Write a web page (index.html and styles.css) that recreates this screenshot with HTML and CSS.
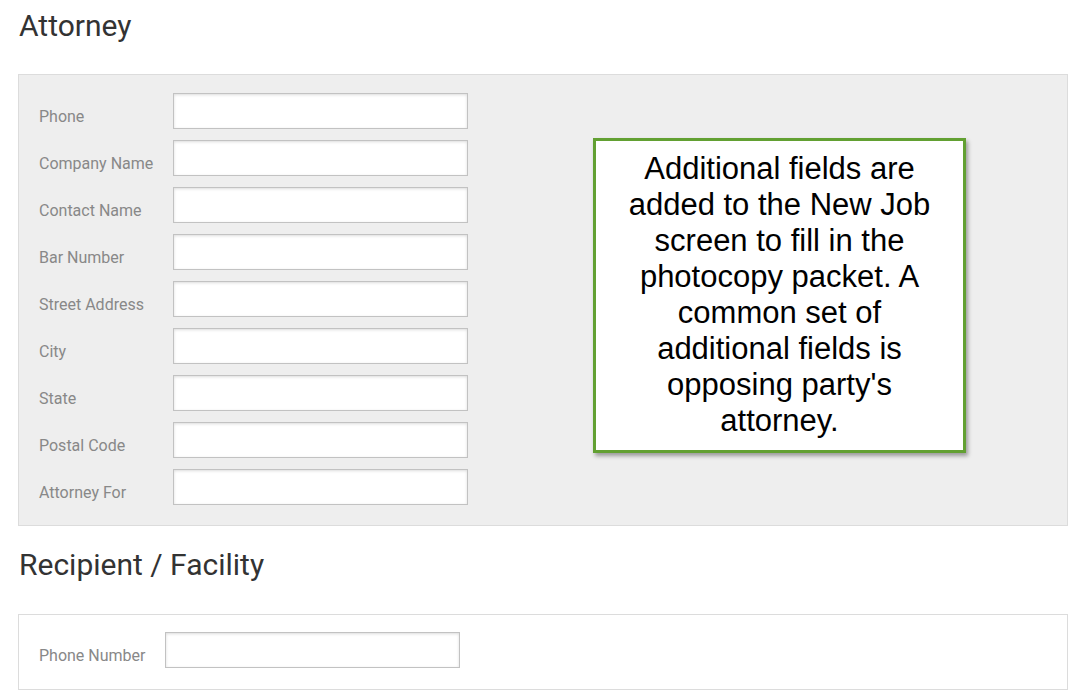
FILE: index.html
```html
<!DOCTYPE html>
<html>
<head>
<meta charset="utf-8">
<link rel="stylesheet" href="styles.css">
</head>
<body>
<div class="page">
  <h2 class="section-title">Attorney</h2>
  <div class="panel panel-gray">
    <div class="form">
      <div class="row"><label class="lbl">Phone</label><input class="field" type="text"></div>
      <div class="row"><label class="lbl">Company Name</label><input class="field" type="text"></div>
      <div class="row"><label class="lbl">Contact Name</label><input class="field" type="text"></div>
      <div class="row"><label class="lbl">Bar Number</label><input class="field" type="text"></div>
      <div class="row"><label class="lbl">Street Address</label><input class="field" type="text"></div>
      <div class="row"><label class="lbl">City</label><input class="field" type="text"></div>
      <div class="row"><label class="lbl">State</label><input class="field" type="text"></div>
      <div class="row"><label class="lbl">Postal Code</label><input class="field" type="text"></div>
      <div class="row"><label class="lbl">Attorney For</label><input class="field" type="text"></div>
    </div>
    <div class="callout">Additional fields are<br>added to the New Job<br>screen to fill in the<br>photocopy packet. A<br>common set of<br>additional fields is<br>opposing party's<br>attorney.</div>
  </div>
  <h2 class="section-title second">Recipient / Facility</h2>
  <div class="panel panel-white">
    <div class="row"><label class="lbl lbl-narrow">Phone Number</label><input class="field" type="text"></div>
  </div>
</div>
</body>
</html>
```
FILE: styles.css
```css
html, body {
  margin: 0;
  padding: 0;
  background: #ffffff;
}
.page {
  width: 1050px;
  padding: 0 0 0 18px;
  font-family: Roboto, "Liberation Sans", sans-serif;
}
.section-title {
  margin: 0;
  padding: 9px 0 0 1px;
  height: 74px;
  box-sizing: border-box;
  font-size: 30px;
  line-height: 34px;
  font-weight: 400;
  color: #333333;
}
.section-title.second {
  height: 88px;
  padding-top: 22px;
}
.panel {
  border: 1px solid #dcdcdc;
  display: flex;
  align-items: flex-start;
}
.panel-gray {
  background: #eeeeee;
  padding: 18px 20px 20px 20px;
}
.panel-white {
  background: #ffffff;
  padding: 17px 20px 21px 20px;
}
.form {
  display: flex;
  flex-direction: column;
  gap: 11px;
}
.row {
  display: flex;
  align-items: flex-start;
}
.lbl {
  width: 134px;
  padding-top: 14px;
  font-size: 16px;
  line-height: 20px;
  color: #888888;
}
.lbl-narrow {
  width: 126px;
}
.field {
  width: 295px;
  height: 36px;
  box-sizing: border-box;
  margin: 0;
  border: 1px solid #c2c2c2;
  background: #ffffff;
  box-shadow: inset 0 1px 3px rgba(0,0,0,0.14);
}
.callout {
  margin: 45px 0 0 125px;
  width: 373px;
  box-sizing: border-box;
  padding: 10px 0 11px 0;
  border: 3px solid #62a032;
  background: #ffffff;
  box-shadow: 2px 3px 4px rgba(0,0,0,0.35);
  font-family: "Liberation Sans", Arial, sans-serif;
  font-size: 31px;
  line-height: 36px;
  color: #000000;
  text-align: center;
}
```
